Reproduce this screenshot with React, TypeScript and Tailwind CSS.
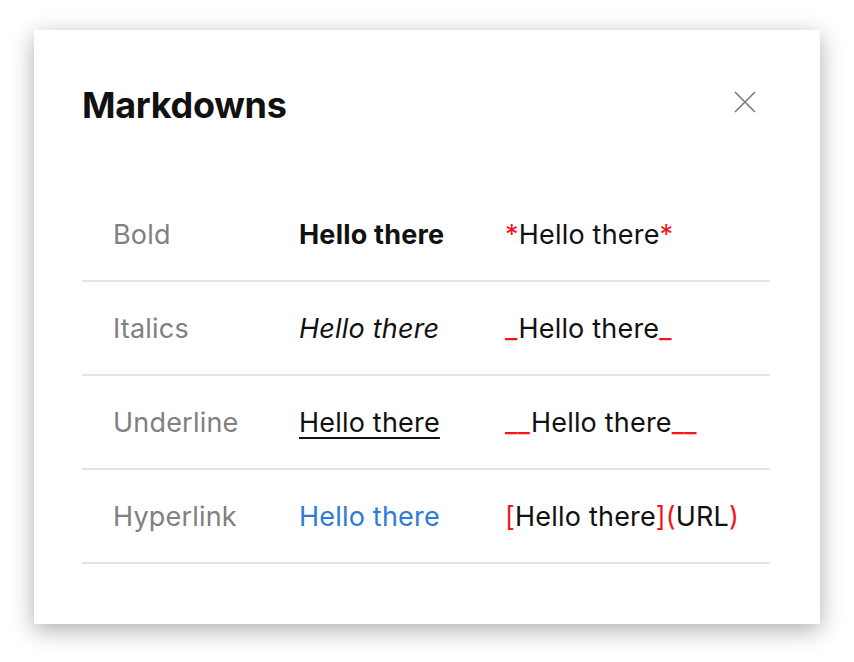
export default function App() {
  const rows = [
    {
      label: "Bold",
      preview: <span className="font-bold">Hello there</span>,
      syntax: (
        <>
          <span className="text-[#f5141e]">*</span>Hello there<span className="text-[#f5141e]">*</span>
        </>
      ),
    },
    {
      label: "Italics",
      preview: <span className="italic">Hello there</span>,
      syntax: (
        <>
          <span className="text-[#f5141e]">_</span>Hello there<span className="text-[#f5141e]">_</span>
        </>
      ),
    },
    {
      label: "Underline",
      preview: <span className="underline underline-offset-[5px] decoration-[2px]">Hello there</span>,
      syntax: (
        <>
          <span className="text-[#f5141e]">__</span>Hello there<span className="text-[#f5141e]">__</span>
        </>
      ),
    },
    {
      label: "Hyperlink",
      preview: <span className="text-[#2d7cd6]">Hello there</span>,
      syntax: (
        <>
          <span className="text-[#f5141e]">[</span>Hello there<span className="text-[#f5141e]">]</span>
          <span className="text-[#f5141e]">(</span>URL<span className="text-[#f5141e]">)</span>
        </>
      ),
    },
  ];

  return (
    <div className="min-h-screen bg-white pt-[30px] pl-[34px] font-['Inter',sans-serif]">
      <div className="w-[786px] h-[594px] bg-white shadow-[0_6px_22px_rgba(0,0,0,0.32)] pl-[48px] pr-[50px] pt-[52px]">
        {/* Header */}
        <div className="flex items-center justify-between h-[46px]">
          <h1 className="text-[36px] font-bold text-[#111] tracking-[-0.3px]">Markdowns</h1>
          <button className="w-[30px] h-[30px] flex items-center justify-center mr-[10px] -mt-[6px]">
            <svg width="22" height="22" viewBox="0 0 22 22" fill="none" stroke="#7a7a7a" strokeWidth="1.6">
              <path d="M1 1L21 21M21 1L1 21" />
            </svg>
          </button>
        </div>

        {/* Rows */}
        <div className="mt-[60px]">
          {rows.map((r) => (
            <div
              key={r.label}
              className="flex items-center h-[94px] border-b-2 border-[#e3e3e3] text-[27px] tracking-[0.2px] text-[#111] pt-[2px]"
            >
              <div className="w-[217px] pl-[31px] text-[#808080]">{r.label}</div>
              <div className="w-[206px]">{r.preview}</div>
              <div className="whitespace-nowrap">{r.syntax}</div>
            </div>
          ))}
        </div>
      </div>
    </div>
  );
}
